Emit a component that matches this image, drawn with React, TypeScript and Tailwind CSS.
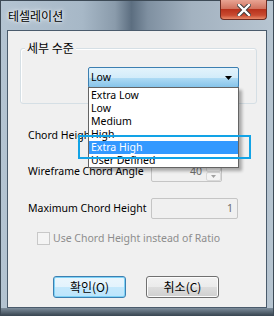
import React from "react";

const latin = "font-['Noto_Sans','Noto_Sans_CJK_KR',sans-serif]";
const korean = "font-['Noto_Sans_CJK_KR',sans-serif]";

const items = ["Extra Low", "Low", "Medium", "High", "Extra High", "User Defined"];

function WinButton({ label, isDefault }: { label: string; isDefault?: boolean }) {
  return (
    <div
      className={`w-[73px] h-[22px] rounded-[3px] border flex items-center justify-center text-[12px] text-black ${korean} ${
        isDefault
          ? "border-[#3c7fb1] bg-[linear-gradient(#eaf6fd_0%,#e3f3fd_50%,#c4e8fc_51%,#bce5fc_100%)] shadow-[inset_0_0_0_1px_#7ed2f6]"
          : "border-[#707070] bg-[linear-gradient(#f2f2f2_0%,#ebebeb_50%,#dddddd_51%,#cfcfcf_100%)] shadow-[inset_0_0_0_1px_#fcfcfc]"
      }`}
    >
      {label}
    </div>
  );
}

export default function App() {
  return (
    <div className="relative w-[274px] h-[316px] overflow-hidden flex flex-col shadow-[inset_0_0_0_1px_#3d4a56] bg-[linear-gradient(90deg,#b4c4d2_0%,#a7b8c7_30%,#8a9bab_42%,#5c6e80_48%,#7f90a1_54%,#a3b2c0_70%,#b7c5d1_100%)]">
      {/* title bar */}
      <div className="h-[30px] flex items-start justify-between">
        <div className={`pl-[8px] pt-[7px] text-[12px] text-black ${korean} [text-shadow:0_0_6px_#ffffff,0_0_3px_#ffffff]`}>
          테셀레이션
        </div>
        <div className="mr-[7px] w-[47px] h-[20px] rounded-b-[4px] border border-t-0 border-[#6e2c22] bg-[linear-gradient(#e8a493_0%,#d1735f_45%,#b8321c_50%,#c94a30_80%,#e88a6a_100%)] flex items-center justify-center">
          <svg width="14" height="12" viewBox="0 0 14 12">
            <path d="M2 1 L12 11 M12 1 L2 11" stroke="#3b3b3b" strokeWidth="4.2" strokeLinecap="square" />
            <path d="M2 1 L12 11 M12 1 L2 11" stroke="#ffffff" strokeWidth="2.4" strokeLinecap="square" />
          </svg>
        </div>
      </div>

      {/* client area */}
      <div className={`ml-[7px] w-[260px] h-[278px] border border-[#4a5b6c] bg-[#f0f0f0] flex flex-col ${latin} text-[10.5px] text-black whitespace-nowrap`}>
        {/* group box */}
        <div className="relative mt-[17px] ml-[12px] w-[237px] h-[56px] rounded-[3px] border border-[#d5dfe5] shadow-[inset_1px_1px_0_#ffffff]">
          <span className={`absolute -top-[10px] left-[4px] px-[2px] bg-[#f0f0f0] text-[12px] leading-[18px] ${korean}`}>
            세부 수준
          </span>
          <div className="mt-[18px] ml-[67px] w-[151px] h-[21px] rounded-[2px] border border-[#3c7fb1] bg-[linear-gradient(#e3f3fc_0%,#d3ecfa_50%,#b0dcf5_51%,#86c4ea_100%)] flex items-center justify-between pl-[2px] pr-[6px]">
            <span className="leading-none">Low</span>
            <svg width="7" height="4" viewBox="0 0 7 4">
              <path d="M0 0 H7 L3.5 4 Z" fill="#000" />
            </svg>
          </div>
        </div>

        {/* rows */}
        <div className="mt-[21px] h-[21px] flex items-center">
          <span className="pl-[20px] w-[143px]">Chord Height Ratio</span>
          <div className="w-[87px] h-[21px] rounded-[2px] border border-[#c5c5c5]" />
        </div>
        <div className="mt-[15px] h-[21px] flex items-center">
          <span className="pl-[20px] w-[143px]">Wireframe Chord Angle</span>
          <div className="w-[71px] h-[21px] rounded-[2px] border border-[#c5c5c5] flex items-center">
            <span className="flex-1 text-right pr-[4px] text-[#6d6d6d]">40</span>
            <div className="w-[15px] h-full flex flex-col">
              <div className="flex-1 border border-[#d9d9d9] rounded-[2px] bg-[#f4f4f4] flex items-center justify-center">
                <svg width="5" height="3" viewBox="0 0 5 3"><path d="M0 3 H5 L2.5 0 Z" fill="#a0a0a0" /></svg>
              </div>
              <div className="flex-1 border border-[#d9d9d9] rounded-[2px] bg-[#f4f4f4] flex items-center justify-center">
                <svg width="5" height="3" viewBox="0 0 5 3"><path d="M0 0 H5 L2.5 3 Z" fill="#a0a0a0" /></svg>
              </div>
            </div>
          </div>
        </div>
        <div className="mt-[16px] h-[21px] flex items-center">
          <span className="pl-[20px] w-[143px]">Maximum Chord Height</span>
          <div className="w-[87px] h-[21px] rounded-[2px] border border-[#c5c5c5] flex items-center justify-end pr-[4px] text-[#6d6d6d]">
            1
          </div>
        </div>

        {/* checkbox */}
        <div className="mt-[13px] pl-[29px] flex items-center gap-[3px] text-[#8d8d8d]">
          <div className="w-[13px] h-[13px] border border-[#c8c8c8] bg-[#f4f4f4]" />
          <span className="leading-[13px]">Use Chord Height instead of Ratio</span>
        </div>

        {/* buttons */}
        <div className="mt-[31px] pl-[45px] flex gap-[20px]">
          <WinButton label="확인(O)" isDefault />
          <WinButton label="취소(C)" />
        </div>
      </div>

      {/* bottom frame */}
      <div className="flex-1 mx-[1px] mb-[1px] bg-[linear-gradient(#7d8d9b,#3f4c58)]" />

      {/* open dropdown list */}
      <div className="absolute left-[88px] top-[87px] w-[151px] h-[81px] border border-[#646464] bg-white pt-[1px] shadow-[3px_3px_3px_rgba(0,0,0,0.3)] text-[10.5px] text-black font-['Noto_Sans',sans-serif]">
        {items.map((item, i) => (
          <div
            key={item}
            className={`h-[13px] pl-[2px] leading-[13px] ${i === 4 ? "bg-[#3399ff] text-white" : ""}`}
          >
            {item}
          </div>
        ))}
      </div>

      {/* highlight annotation */}
      <div className="absolute left-[78px] top-[135px] w-[173px] h-[24px] border-[2px] border-[#12a3e6]" />
    </div>
  );
}
